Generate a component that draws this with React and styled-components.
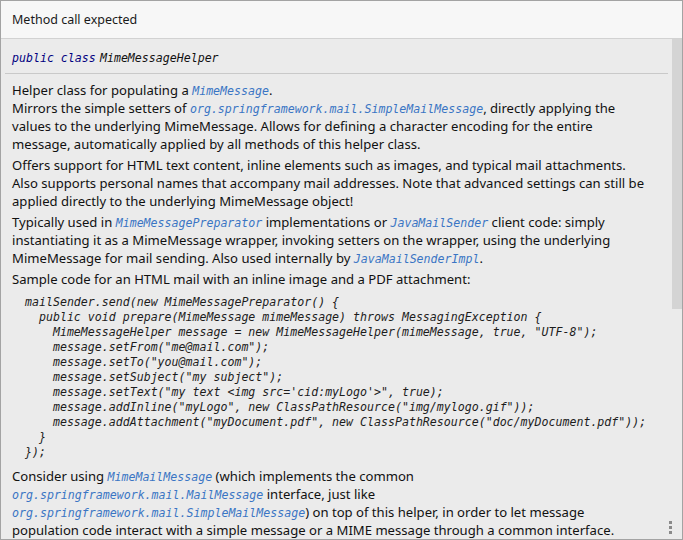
import React from "react";
import styled, { createGlobalStyle } from "styled-components";

const Global = createGlobalStyle`
  html, body { margin: 0; padding: 0; background: #ffffff; }
  * { box-sizing: border-box; }
`;

const Frame = styled.div`
  position: relative;
  width: 683px;
  height: 540px;
  border: 1px solid #a3a3a3;
  display: flex;
  flex-direction: column;
  background: #ebebeb;
  overflow: hidden;
  font-family: "Noto Sans", "Open Sans", sans-serif;
  color: #111;
`;

const Header = styled.div`
  height: 38px;
  flex: none;
  background: #f7f7f7;
  border-bottom: 1px solid #d2d2d2;
  display: flex;
  align-items: center;
  padding: 0 11px 1px;
  font-size: 12.5px;
  color: #1a1a1a;
`;

const Main = styled.div`
  flex: 1;
  display: flex;
  min-height: 0;
`;

const Content = styled.div`
  flex: 1;
  min-width: 0;
  overflow: hidden;
  padding: 10px 4px 0 11px;
`;

const Track = styled.div`
  width: 10px;
  flex: none;
`;

const Thumb = styled.div`
  height: 270px;
  background: #d4d4d4;
`;

const Mono = styled.span`
  font-family: "DejaVu Sans Mono", "Liberation Mono", monospace;
  font-style: italic;
  font-size: 11.6px;
  color: ${(p) => (p.$kw ? "#000080" : "inherit")};
`;

const Link = styled.span`
  font-family: "DejaVu Sans Mono", "Liberation Mono", monospace;
  font-style: italic;
  font-size: 11.6px;
  line-height: 1;
  color: #3a75c4;
`;

const Definition = styled.div`
  line-height: 15px;
  padding-bottom: 7px;
  border-bottom: 1px solid #c9c9c9;
  margin-left: -7px;
  padding-left: 7px;
  color: #111;
`;

const Body = styled.div`
  padding-top: 7px;
  font-size: 13.1px;
  line-height: 18px;
`;

const Para = styled.p`
  margin: 0 0 3px;
  white-space: nowrap;
`;

const Code = styled.pre`
  margin: 7px 0 7px 13px;
  font-family: "DejaVu Sans Mono", "Liberation Mono", monospace;
  font-style: italic;
  font-size: 11.6px;
  line-height: 15px;
  color: #1c1c1c;
`;

const Dots = styled.div`
  position: absolute;
  right: 10px;
  bottom: 5px;
  display: flex;
  flex-direction: column;
  gap: 2px;
`;

const Dot = styled.span`
  width: 3px;
  height: 3px;
  background: #8a8a8a;
`;

const code = `mailSender.send(new MimeMessagePreparator() {
  public void prepare(MimeMessage mimeMessage) throws MessagingException {
    MimeMessageHelper message = new MimeMessageHelper(mimeMessage, true, "UTF-8");
    message.setFrom("me@mail.com");
    message.setTo("you@mail.com");
    message.setSubject("my subject");
    message.setText("my text <img src='cid:myLogo'>", true);
    message.addInline("myLogo", new ClassPathResource("img/mylogo.gif"));
    message.addAttachment("myDocument.pdf", new ClassPathResource("doc/myDocument.pdf"));
  }
});`;

export default function App() {
  return (
    <>
      <Global />
      <Frame>
        <Header>Method call expected</Header>
        <Main>
          <Content>
            <Definition>
              <Mono $kw>public class</Mono> <Mono>MimeMessageHelper</Mono>
            </Definition>
            <Body>
              <Para>
                Helper class for populating a <Link>MimeMessage</Link>.<br />
                Mirrors the simple setters of{" "}
                <Link>org.springframework.mail.SimpleMailMessage</Link>, directly applying the
                <br />
                values to the underlying MimeMessage. Allows for defining a character encoding for the entire
                <br />
                message, automatically applied by all methods of this helper class.
              </Para>
              <Para>
                Offers support for HTML text content, inline elements such as images, and typical mail attachments.
                <br />
                Also supports personal names that accompany mail addresses. Note that advanced settings can still be
                <br />
                applied directly to the underlying MimeMessage object!
              </Para>
              <Para>
                Typically used in <Link>MimeMessagePreparator</Link> implementations or{" "}
                <Link>JavaMailSender</Link> client code: simply
                <br />
                instantiating it as a MimeMessage wrapper, invoking setters on the wrapper, using the underlying
                <br />
                MimeMessage for mail sending. Also used internally by <Link>JavaMailSenderImpl</Link>.
              </Para>
              <Para>Sample code for an HTML mail with an inline image and a PDF attachment:</Para>
              <Code>{code}</Code>
              <Para>
                Consider using <Link>MimeMailMessage</Link> (which implements the common
                <br />
                <Link>org.springframework.mail.MailMessage</Link> interface, just like
                <br />
                <Link>org.springframework.mail.SimpleMailMessage</Link>) on top of this helper, in order to let message
                <br />
                population code interact with a simple message or a MIME message through a common interface.
              </Para>
            </Body>
          </Content>
          <Track>
            <Thumb />
          </Track>
        </Main>
        <Dots>
          <Dot />
          <Dot />
          <Dot />
        </Dots>
      </Frame>
    </>
  );
}
